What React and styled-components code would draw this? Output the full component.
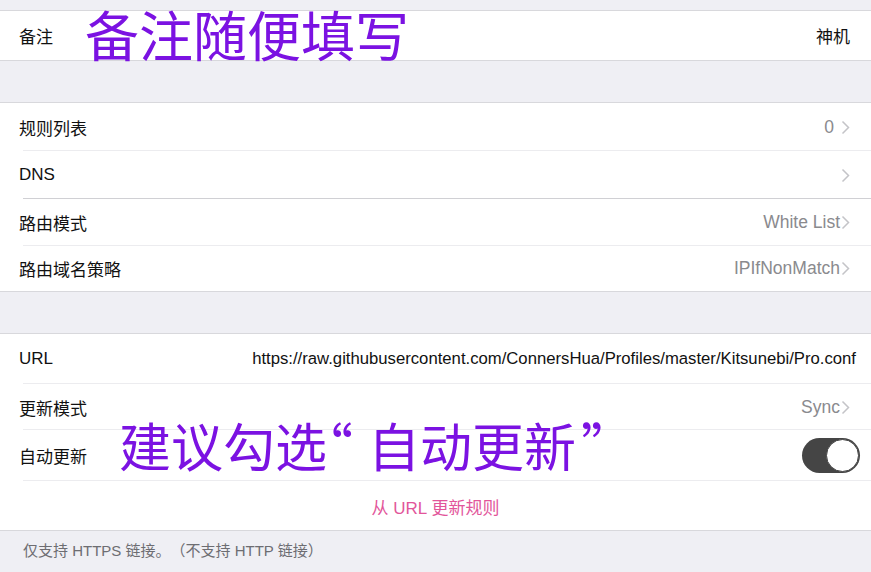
import React from "react";
import styled, { createGlobalStyle } from "styled-components";

const GlobalStyle = createGlobalStyle`
    html, body {
        margin: 0;
        padding: 0;
        background: #efeff4;
    }
    body {
        font-family: "Liberation Sans", "Noto Sans CJK SC", sans-serif;
        -webkit-font-smoothing: antialiased;
    }
`;

const Page = styled.div`
    position: relative;
    width: 871px;
    height: 572px;
    overflow: hidden;
    background: #efeff4;
    padding-top: 10px;
    box-sizing: border-box;
`;

const Group = styled.div`
    background: #fff;
    border-top: 1px solid #d8d8dc;
    border-bottom: 1px solid #d8d8dc;
    margin-bottom: ${(p) => p.gap || 0}px;
`;

const Row = styled.div`
    position: relative;
    display: flex;
    align-items: center;
    height: ${(p) => p.h || 47}px;
    padding: 0 21px 0 19px;
    font-size: 17px;
    color: #111;

    &:after {
        content: "";
        display: ${(p) => (p.last ? "none" : "block")};
        position: absolute;
        left: 23px;
        right: 0;
        bottom: 0;
        height: 1px;
        background: ${(p) => (p.dark ? "#d0d0d4" : "#ececef")};
    }
`;

const Label = styled.div`
    flex: none;
`;

const Value = styled.div`
    margin-left: auto;
    margin-right: ${(p) => p.pull || 0}px;
    display: flex;
    align-items: center;
    color: ${(p) => (p.dark ? "#111" : "#8a8a8e")};
    font-size: ${(p) => p.size || 17.5}px;
    white-space: nowrap;
`;

const Count = styled.span`
    margin-right: 6px;
`;

const Chevron = styled.svg`
    width: 9px;
    height: 15px;
    margin-left: 1px;
`;

const Toggle = styled.div`
    position: relative;
    width: 58px;
    height: 35px;
    border-radius: 18px;
    background: #454545;
`;

const Knob = styled.div`
    position: absolute;
    right: 1px;
    top: 1px;
    width: 31px;
    height: 31px;
    border-radius: 50%;
    background: #fff;
    border: 1px solid #454545;
`;

const ActionRow = styled.div`
    display: flex;
    justify-content: center;
    align-items: center;
    height: 49px;
    padding-top: 1px;
    box-sizing: border-box;
    color: #e2559a;
    font-size: 17px;
`;

const Footer = styled.div`
    padding: 8px 23px;
    font-size: 15px;
    color: #6d6d72;
    text-spacing-trim: space-all;
`;

const Note = styled.div`
    position: absolute;
    left: ${(p) => p.x}px;
    top: ${(p) => p.y}px;
    color: #7b12e2;
    font-family: "Noto Sans CJK SC", sans-serif;
    font-size: ${(p) => p.size}px;
    line-height: 1.2;
    white-space: nowrap;
`;

const Quote = styled.span`
    font-feature-settings: "halt";
    margin: ${(p) => (p.open ? "0 15px 0 0" : "0 0 0 5px")};
`;

const Arrow = () => (
    <Chevron viewBox="0 0 9 15">
        <path d="M1.5 1.5 L7.5 7.5 L1.5 13.5" fill="none" stroke="#c4c4c8" strokeWidth="1.5" />
    </Chevron>
);

const App = () => {
    return (
        <Page>
            <GlobalStyle />
            <Group gap={41}>
                <Row h={49} last>
                    <Label>备注</Label>
                    <Value dark size={17}>
                        神机
                    </Value>
                </Row>
            </Group>
            <Group gap={41}>
                <Row h={48}>
                    <Label>规则列表</Label>
                    <Value>
                        <Count>0</Count>
                        <Arrow />
                    </Value>
                </Row>
                <Row h={48} dark>
                    <Label>DNS</Label>
                    <Value>
                        <Arrow />
                    </Value>
                </Row>
                <Row h={47}>
                    <Label>路由模式</Label>
                    <Value>
                        White List
                        <Arrow />
                    </Value>
                </Row>
                <Row h={45} last>
                    <Label>路由域名策略</Label>
                    <Value>
                        IPIfNonMatch
                        <Arrow />
                    </Value>
                </Row>
            </Group>
            <Group>
                <Row h={50}>
                    <Label>URL</Label>
                    <Value dark size={16.7} pull={-6}>
                        https://raw.githubusercontent.com/ConnersHua/Profiles/master/Kitsunebi/Pro.conf
                    </Value>
                </Row>
                <Row h={46}>
                    <Label>更新模式</Label>
                    <Value>
                        Sync
                        <Arrow />
                    </Value>
                </Row>
                <Row h={51}>
                    <Label>自动更新</Label>
                    <Value pull={-10}>
                        <Toggle>
                            <Knob />
                        </Toggle>
                    </Value>
                </Row>
                <ActionRow>从 URL 更新规则</ActionRow>
            </Group>
            <Footer>仅支持 HTTPS 链接。（不支持 HTTP 链接）</Footer>
            <Note x={85} y={2} size={54}>
                备注随便填写
            </Note>
            <Note x={119} y={414} size={52}>
                建议勾选<Quote open>“</Quote>自动更新<Quote>”</Quote>
            </Note>
        </Page>
    );
};

export default App;
